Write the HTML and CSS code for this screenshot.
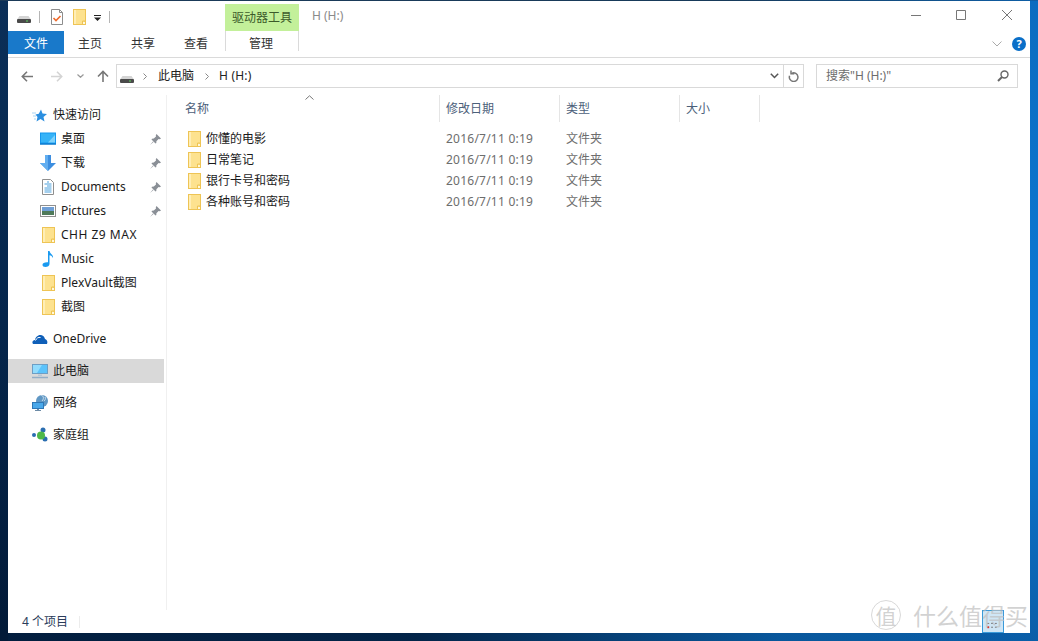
FILE: index.html
```html
<!DOCTYPE html>
<html lang="zh-CN">
<head>
<meta charset="utf-8">
<title>H (H:)</title>
<link rel="stylesheet" href="styles.css">
</head>
<body>
<svg class="defs" width="0" height="0">
  <defs>
    <symbol id="folder" viewBox="0 0 13 16">
      <rect width="13" height="16" fill="#eec455"/>
      <path d="M1 1h11v11l-3 3H1z" fill="#fde28f"/>
      <path d="M1 1h2v14H1z" fill="#ffeeb6"/>
      <path d="M9.500 15.500v-3.500H13" fill="none" stroke="#eec455"/>
      <path d="M10 13h2v2h-2z" fill="#fff8dc"/>
    </symbol>
    <symbol id="drive" viewBox="0 0 14 7">
      <path d="M2.500 0h9L14 3.500H0z" fill="#d4d4d4"/>
      <rect y="3" width="14" height="4" rx="1" fill="#4a4a4a"/>
      <rect x="9" y="4.500" width="2" height="1" fill="#5fd35f"/>
    </symbol>
    <symbol id="pin" viewBox="0 0 11 11">
      <path d="M6.500 0 11 4.500 9.800 5.200 8.600 5 6.400 7.200 6.300 9 5.500 9.600 1.500 5.500 2 4.700 3.800 4.600 6 2.400 5.800 1.200zM3 7.500 0 11l3.500-3z" fill="#8a8f96"/>
    </symbol>
  </defs>
</svg>

<div class="window">
  <header class="titlebar">
    <div class="quick">
      <svg class="ic-drive"><use href="#drive"/></svg>
      <i class="qsep"></i>
      <svg class="ic-note" viewBox="0 0 12 16">
        <path d="M.5.500h8l3 3v12H.5z" fill="#fff" stroke="#8d8d8d"/>
        <path d="M8.500.5v3h3" fill="none" stroke="#8d8d8d"/>
        <path d="M2.500 9l2.500 2.500L9.500 7" fill="none" stroke="#ee6a2c" stroke-width="1.600"/>
      </svg>
      <svg class="ic-qfolder"><use href="#folder"/></svg>
      <svg class="ic-qdown" viewBox="0 0 7 6"><path d="M0 0h7v1H0zM0 2.500h7L3.500 6z" fill="#222"/></svg>
      <i class="qsep qsep-end"></i>
    </div>
    <div class="context-tab">驱动器工具</div>
    <div class="win-title">H (H:)</div>
    <div class="win-controls">
      <svg class="wc wc-min" viewBox="0 0 10 10"><path d="M0 5.500h10" stroke="#777"/></svg>
      <svg class="wc wc-max" viewBox="0 0 10 10"><path d="M.5.500h9v9h-9z" fill="none" stroke="#777"/></svg>
      <svg class="wc wc-close" viewBox="0 0 10 10"><path d="M0 0l10 10M10 0 0 10" stroke="#777"/></svg>
    </div>
  </header>

  <nav class="tabs">
    <div class="tab-file">文件</div>
    <div class="tab tab-home">主页</div>
    <div class="tab tab-share">共享</div>
    <div class="tab tab-view">查看</div>
    <div class="tab tab-manage">管理</div>
    <div class="ribbon-right">
      <svg class="rib-chev" viewBox="0 0 10 6"><path d="M.5.500 5 5 9.500.5" fill="none" stroke="#aaa"/></svg>
      <div class="help">?</div>
    </div>
  </nav>

  <div class="addressbar">
    <svg class="nav nav-back" viewBox="0 0 12 11"><path d="M12 5.500H1.500M6 .8 1.300 5.500 6 10.200" fill="none" stroke="#777" stroke-width="1.600"/></svg>
    <svg class="nav nav-fwd" viewBox="0 0 12 11"><path d="M0 5.500h10.500M6 .8l4.700 4.700L6 10.200" fill="none" stroke="#d4d4d4" stroke-width="1.600"/></svg>
    <svg class="nav nav-recent" viewBox="0 0 7 4"><path d="M.5.500 3.500 3.300 6.500.5" fill="none" stroke="#999" stroke-width="1.200"/></svg>
    <svg class="nav nav-up" viewBox="0 0 12 12"><path d="M6 12V1.500M1 6.500l5-5 5 5" fill="none" stroke="#777" stroke-width="1.600"/></svg>
    <div class="crumbs">
      <svg class="ic-crumb"><use href="#drive"/></svg>
      <svg class="crumb-sep" viewBox="0 0 4 7"><path d="M.5.500l3 3-3 3" fill="none" stroke="#888"/></svg>
      <span class="crumb">此电脑</span>
      <svg class="crumb-sep" viewBox="0 0 4 7"><path d="M.5.500l3 3-3 3" fill="none" stroke="#888"/></svg>
      <span class="crumb crumb-drive">H (H:)</span>
      <svg class="crumb-drop" viewBox="0 0 9 6"><path d="M.8.800 4.500 4.500 8.200.8" fill="none" stroke="#555" stroke-width="1.500"/></svg>
      <div class="refresh">
        <svg viewBox="0 0 11 12"><path d="M4 3.200A4.300 4.300 0 1 1 1.600 5.700" fill="none" stroke="#777" stroke-width="1.500"/><path d="M3 .5v3.300h3.300" fill="none" stroke="#777" stroke-width="1.500"/></svg>
      </div>
    </div>
    <div class="search">
      <span>搜索"H (H:)"</span>
      <svg class="search-ic" viewBox="0 0 12 12"><circle cx="7.500" cy="4.500" r="3.500" fill="none" stroke="#666" stroke-width="1.400"/><path d="M5 7 1 11" stroke="#666" stroke-width="2"/></svg>
    </div>
  </div>

  <main class="main">
    <aside class="sidebar">
      <section class="nav-group">
        <div class="row top">
          <svg class="ico" viewBox="0 0 16 16"><path d="M9 2.500 10.500 6.500 15 7 11.500 10 12.500 14.500 8.500 12 4.500 14.500 5.500 10 3.500 7.500 6.800 6.800z" fill="#2b8fe0"/><path d="M0 6h4M1 9h3M2 12h2" stroke="#a9d4f3"/></svg>
          <span>快速访问</span>
        </div>
        <div class="row sub">
          <svg class="ico" viewBox="0 0 16 16"><rect y="1.500" width="16" height="12" fill="#1597ee"/><path d="M1 2.500h14v9H1z" fill="#36b3f7"/><path d="M8 11.500 15 4v7.500z" fill="#7fd2fb"/><path d="M0 13h16" stroke="#0a6fc0"/></svg>
          <span>桌面</span><svg class="pin"><use href="#pin"/></svg>
        </div>
        <div class="row sub">
          <svg class="ico" viewBox="0 0 16 16"><path d="M5 0h6v8h5l-8 8-8-8h5z" fill="#3d8ee0"/><path d="M5 0h3v16L0 8h5z" fill="#62aef0"/></svg>
          <span>下载</span><svg class="pin"><use href="#pin"/></svg>
        </div>
        <div class="row sub">
          <svg class="ico" viewBox="0 0 16 16"><path d="M2.500.5h8l3 3v12h-11z" fill="#fff" stroke="#8f8f8f"/><path d="M4.500 5h7M7 7h4.500M4.500 9h7M4.500 11h7M4.500 13h7M7 3h2" stroke="#4aa0dc"/></svg>
          <span>Documents</span><svg class="pin"><use href="#pin"/></svg>
        </div>
        <div class="row sub">
          <svg class="ico" viewBox="0 0 16 16"><rect x=".5" y="2.500" width="15" height="11" fill="#fff" stroke="#8f8f8f"/><rect x="2" y="4" width="12" height="4" fill="#6f9fd6"/><rect x="2" y="8" width="12" height="4" fill="#4f7a5a"/></svg>
          <span>Pictures</span><svg class="pin"><use href="#pin"/></svg>
        </div>
        <div class="row sub"><svg class="ico-folder"><use href="#folder"/></svg><span class="label-wide">CHH Z9 MAX</span></div>
        <div class="row sub">
          <svg class="ico" viewBox="0 0 16 16"><path d="M8 0h1.500c.5 3 4 3.500 3.500 7-.8-1.800-2-2.500-3.500-2.800V13c0 2-2 3-4 3s-3-1-3-2.300C2.500 12 4.500 11 8 11.200z" fill="#1a9af0"/></svg>
          <span>Music</span>
        </div>
        <div class="row sub"><svg class="ico-folder"><use href="#folder"/></svg><span>PlexVault截图</span></div>
        <div class="row sub"><svg class="ico-folder"><use href="#folder"/></svg><span>截图</span></div>
      </section>
      <section class="nav-group">
        <div class="row top">
          <svg class="ico" viewBox="0 0 16 16"><path d="M1 13c-1.500-2 0-4 2-4 .5-3 3-5.500 6-5 2 .3 3.500 2 4 4 2 .5 3 3 2 5z" fill="#0f5fb8"/><path d="M3.500 9.500c1-2.500 3-3.500 5-3" fill="none" stroke="#fff"/></svg>
          <span>OneDrive</span>
        </div>
      </section>
      <section class="nav-group">
        <div class="row top selected">
          <svg class="ico" viewBox="0 0 16 16"><rect y="1" width="16" height="10" fill="#6e9ec4"/><rect x="1" y="2" width="14" height="8" fill="#5cc3fb"/><path d="M1 2h9L5 10H1z" fill="#92dcfd"/><path d="M6 11.500h4V13H6z" fill="#b5c6d6"/><path d="M0 14.500h16" stroke="#94aec6" stroke-width="1.500"/></svg>
          <span>此电脑</span>
        </div>
      </section>
      <section class="nav-group">
        <div class="row top">
          <svg class="ico" viewBox="0 0 16 16"><circle cx="10" cy="6" r="6" fill="#5f97c4"/><path d="M9 0c3 1 3 4 1 6M13 2c1 2 0 3-1 4" stroke="#cfe2ef" fill="none"/><rect y="7" width="12" height="7" fill="#2f77b5"/><rect x="1" y="8" width="10" height="5" fill="#49a8ea"/><path d="M5 14h2v1H5zM3 15h6v1H3z" fill="#6d8ba6"/></svg>
          <span>网络</span>
        </div>
      </section>
      <section class="nav-group">
        <div class="row top">
          <svg class="ico" viewBox="0 0 16 16"><circle cx="2" cy="8" r="2" fill="#2a6db0"/><circle cx="11" cy="3" r="2.500" fill="#2a6db0"/><circle cx="13" cy="12" r="2.500" fill="#2a6db0"/><circle cx="9" cy="8.500" r="4" fill="#4fb848"/></svg>
          <span>家庭组</span>
        </div>
      </section>
    </aside>

    <section class="files">
      <div class="file-head">
        <div class="col col-name">名称<svg class="sort" viewBox="0 0 9 5"><path d="M.5 4.500 4.500.8 8.500 4.500" fill="none" stroke="#777"/></svg></div>
        <div class="col col-date">修改日期</div>
        <div class="col col-type">类型</div>
        <div class="col col-size">大小</div>
      </div>
      <div class="file-list">
        <div class="file"><div class="f-name"><svg class="ico-folder"><use href="#folder"/></svg><span>你懂的电影</span></div><div class="f-date">2016/7/11 0:19</div><div class="f-type">文件夹</div></div>
        <div class="file"><div class="f-name"><svg class="ico-folder"><use href="#folder"/></svg><span>日常笔记</span></div><div class="f-date">2016/7/11 0:19</div><div class="f-type">文件夹</div></div>
        <div class="file"><div class="f-name"><svg class="ico-folder"><use href="#folder"/></svg><span>银行卡号和密码</span></div><div class="f-date">2016/7/11 0:19</div><div class="f-type">文件夹</div></div>
        <div class="file"><div class="f-name"><svg class="ico-folder"><use href="#folder"/></svg><span>各种账号和密码</span></div><div class="f-date">2016/7/11 0:19</div><div class="f-type">文件夹</div></div>
      </div>
    </section>
  </main>

  <footer class="statusbar"><span class="status-count">4 个项目</span><i class="status-sep"></i></footer>
</div>

<div class="wm-box">
  <svg viewBox="0 0 20 22"><path d="M4 13h2M8 13h2M12 13h2M8 17h2M12 17h2" stroke="#777"/><rect x="4" y="16" width="2" height="2" fill="#d33"/></svg>
</div>
<div class="watermark">
  <span class="wm-circle">值</span>
  <span class="wm-text">什么值得买</span>
</div>
</body>
</html>
```

FILE: styles.css
```css
* { box-sizing: border-box; }
html, body { height: 100%; }
body {
  margin: 0;
  padding: 1px 8px 8px;
  overflow: hidden;
  font: 12px/16px "Noto Sans", "Noto Sans CJK SC", sans-serif;
  color: #1a1a1a;
  background:
    linear-gradient(90deg, rgba(2, 26, 56, .95) 0, rgba(2, 30, 62, .9) 40%, rgba(8, 84, 150, .7) 75%, rgba(8, 84, 150, 0) 100%) bottom / 100% 8px no-repeat,
    linear-gradient(90deg, #1c3a58 0, #173a5a 70%, #0d5ea6 100%) top / 100% 1px no-repeat,
    linear-gradient(180deg, #0b2f58 0, #05264c 50%, #021a38 100%) left / 8px 100% no-repeat,
    linear-gradient(180deg, #0a6cc0 0, #0a7ad6 60%, #0a5ea8 100%);
}
.defs { position: absolute; }
i { display: block; }
svg { display: block; flex: none; }

.window {
  width: 1022px;
  height: 632px;
  background: #fff;
  display: flex;
  flex-direction: column;
}

/* title bar */
.titlebar { height: 30px; display: flex; flex: none; }
.quick { width: 217px; display: flex; align-items: center; padding: 2px 0 0 9px; }
.ic-drive { width: 14px; height: 7px; margin-top: 4px; }
.qsep { width: 1px; height: 12px; background: #b5b5b5; margin-left: 8px; }
.ic-note { width: 12px; height: 16px; margin-left: 11px; }
.ic-qfolder { width: 13px; height: 16px; margin-left: 10px; }
.ic-qdown { width: 7px; height: 6px; margin-left: 8px; margin-top: 2px; }
.qsep-end { margin-left: 8px; }
.context-tab {
  width: 74px;
  height: 27px;
  margin-top: 3px;
  background: #c3f09a;
  color: #3c5a2a;
  text-align: center;
  line-height: 27px;
}
.win-title { margin-left: 13px; padding-top: 7px; color: #8a8a8a; }
.win-controls { margin-left: auto; display: flex; align-items: flex-start; padding-top: 9px; }
.wc { width: 10px; height: 10px; }
.wc-max { margin-left: 35px; }
.wc-close { margin-left: 36px; margin-right: 18px; }

/* ribbon tabs */
.tabs {
  height: 27px;
  flex: none;
  display: flex;
  border-bottom: 1px solid #dadada;
}
.tab-file {
  width: 56px;
  height: 23px;
  background: #1979ca;
  color: #fff;
  text-align: center;
  line-height: 25px;
}
.tab { height: 23px; line-height: 25px; color: #333; text-align: center; }
.tab-home { width: 52px; }
.tab-share { width: 54px; }
.tab-view { width: 52px; }
.tab-manage {
  width: 74px;
  margin-left: 3px;
  padding-right: 2px;
  height: 20px;
  border-left: 1px solid #dadada;
  border-right: 1px solid #dadada;
}
.ribbon-right { margin-left: auto; display: flex; align-items: center; padding: 0 4px 0 0; height: 26px; }
.rib-chev { width: 10px; height: 6px; }
.help {
  width: 14px;
  height: 14px;
  margin-left: 10px;
  border-radius: 50%;
  background: #0a6fc8;
  color: #fff;
  font-weight: 700;
  font-size: 11px;
  line-height: 14px;
  text-align: center;
}

/* address bar */
.addressbar { height: 30px; flex: none; display: flex; align-items: center; padding-top: 6px; padding-left: 13px; }
.nav-back, .nav-fwd { width: 12px; height: 11px; }
.nav-fwd { margin-left: 18px; }
.nav-recent { width: 7px; height: 4px; margin-left: 14px; }
.nav-up { width: 12px; height: 12px; margin-left: 13px; }
.crumbs {
  width: 688px;
  height: 24px;
  margin-left: 7px;
  border: 1px solid #d9d9d9;
  display: flex;
  align-items: center;
  color: #222;
}
.ic-crumb { width: 14px; height: 7px; margin-left: 3px; margin-top: 6px; }
.crumb-sep { width: 4px; height: 7px; margin-left: 9px; }
.crumb-sep + .crumb { margin-left: 11px; }
.crumb + .crumb-sep { margin-left: 11px; }
.crumb-sep + .crumb-drive { margin-left: 10px; letter-spacing: .2px; }
.crumb-drop { width: 9px; height: 6px; margin-left: auto; margin-right: 4px; }
.refresh {
  width: 20px;
  height: 22px;
  border-left: 1px solid #d9d9d9;
  display: flex;
  align-items: center;
  justify-content: center;
}
.refresh svg { width: 11px; height: 12px; }
.search {
  width: 202px;
  height: 24px;
  margin-left: 12px;
  border: 1px solid #d9d9d9;
  display: flex;
  align-items: center;
  justify-content: space-between;
  padding: 0 8px 0 9px;
  color: #6d6d6d;
}
.search-ic { width: 12px; height: 12px; }

/* main */
.main { flex: 1; min-height: 0; display: flex; }
.sidebar {
  width: 159px;
  margin-top: 7px;
  padding-top: 8px;
  border-right: 1px solid #f0f0f0;
  flex: none;
}
.nav-group + .nav-group { margin-top: 8px; }
.row { height: 24px; display: flex; align-items: center; color: #1a1a1a; margin-right: 2px; }
.row.top { padding-left: 24px; }
.row.sub { padding-left: 32px; }
.row span { margin-left: 5px; }
.label-wide { letter-spacing: .5px; }
.selected { background: #d9d9d9; }
.ico { width: 16px; height: 16px; }
.ico-folder { width: 13px; height: 16px; }
.row.sub .ico-folder { margin-left: 2px; margin-right: 1px; }
.row.sub .ico + span { margin-left: 5px; }
.pin { width: 11px; height: 11px; margin-left: auto; margin-right: 3px; }

.files { flex: 1; }
.file-head { display: flex; height: 27px; margin-top: 7px; }
.col { position: relative; padding: 6px 0 0 6px; border-right: 1px solid #e5e5e5; color: #4c607a; height: 27px; }
.col-name { width: 273px; padding-left: 18px; }
.col-date { width: 120px; }
.col-type { width: 120px; }
.col-size { width: 80px; }
.sort { position: absolute; left: 138px; top: 0; width: 9px; height: 5px; }
.file-list { padding-top: 6px; }
.file { height: 21px; display: flex; align-items: center; color: #6d6d6d; }
.f-name { width: 273px; display: flex; align-items: center; padding-left: 21px; color: #1a1a1a; }
.f-name span { margin-left: 5px; }
.f-date { width: 120px; padding-left: 6px; letter-spacing: .23px; }
.f-type { padding-left: 6px; }

/* status bar */
.statusbar { height: 23px; flex: none; display: flex; align-items: center; padding-left: 14px; color: #2b3c5a; }
.status-sep { width: 1px; height: 12px; background: #ececec; margin-left: 11px; }

/* watermark over the window */
.wm-box {
  position: absolute;
  left: 982px;
  top: 610px;
  width: 22px;
  height: 23px;
  background: #cfe6f5;
  border: 1px solid #3a9ad9;
}
.wm-box svg { width: 20px; height: 21px; }
.watermark {
  position: absolute;
  left: 871px;
  top: 600px;
  display: flex;
  align-items: center;
  color: rgba(190, 190, 190, .7);
  font-family: "Noto Sans CJK SC", sans-serif;
}
.wm-circle {
  width: 30px;
  height: 30px;
  border: 1px solid rgba(200, 200, 200, .7);
  border-radius: 50%;
  font-size: 21px;
  line-height: 28px;
  text-align: center;
}
.wm-text { margin-left: 12px; font-size: 23px; line-height: 30px; white-space: nowrap; }
```
